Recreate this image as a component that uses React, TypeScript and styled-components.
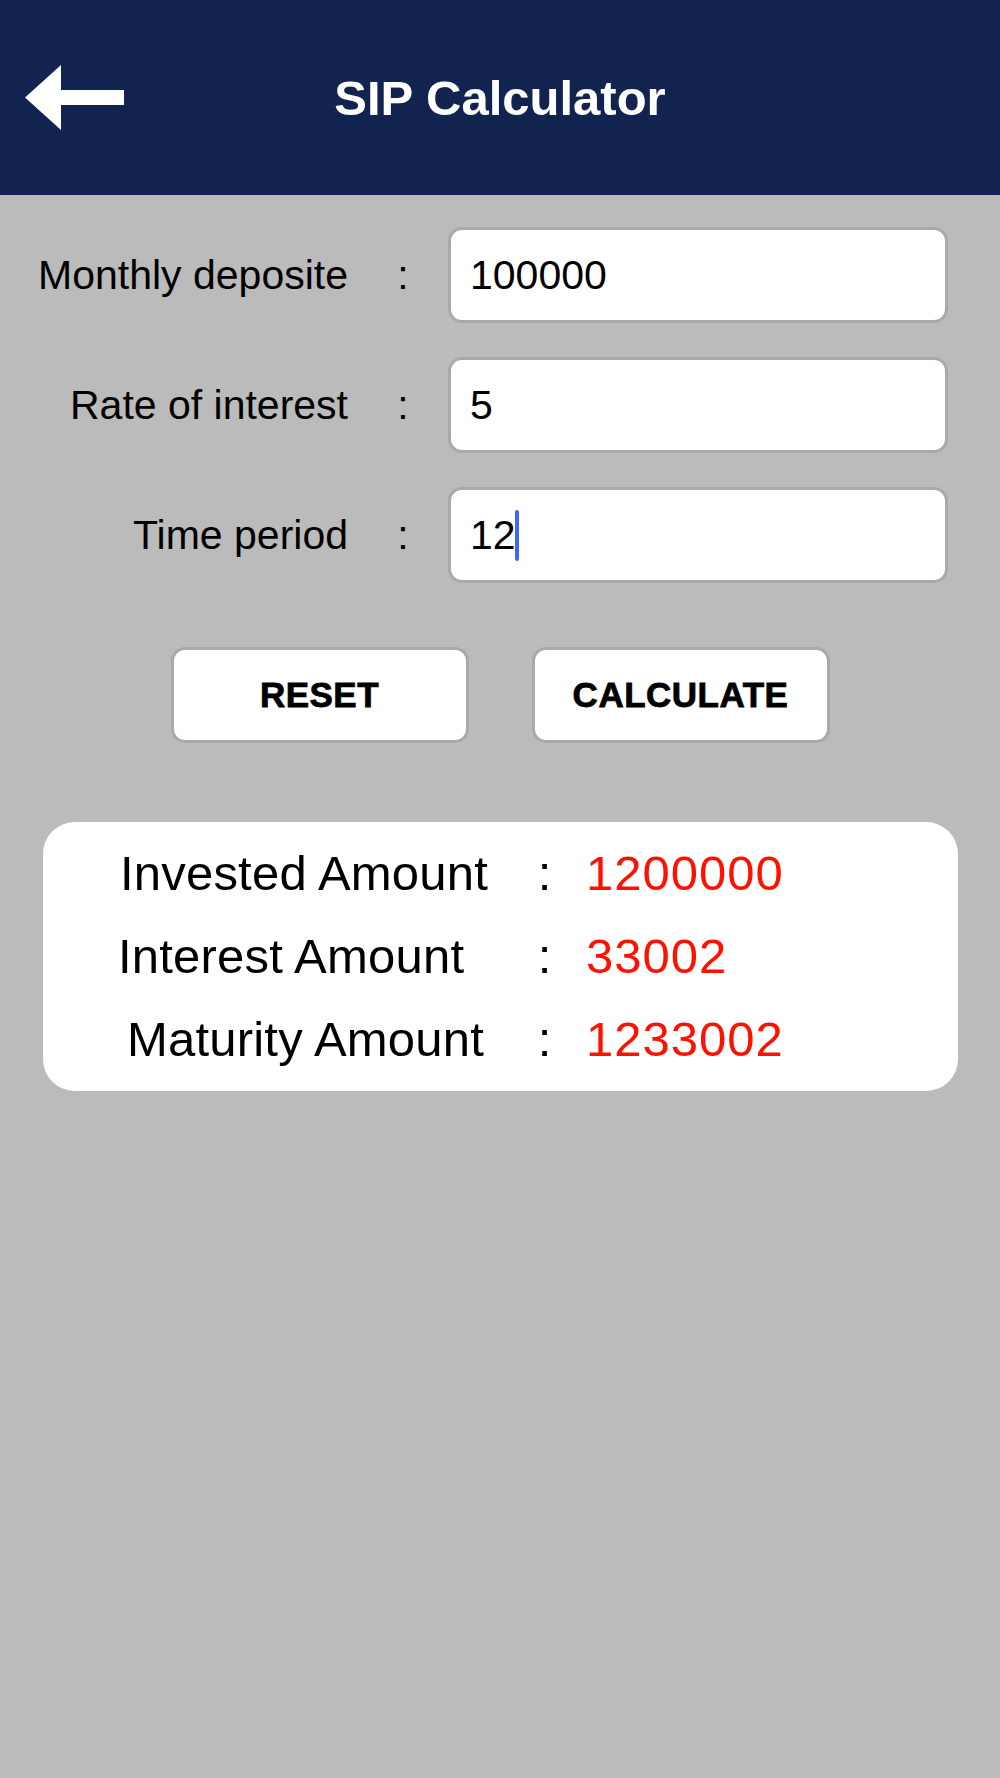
import styled, { createGlobalStyle } from "styled-components";

const GlobalStyle = createGlobalStyle`
  html, body {
    margin: 0;
    padding: 0;
    background: #bbbbbb;
    font-family: "Liberation Sans", Arial, sans-serif;
  }
`;

const fields = [
  { label: "Monthly deposite", value: "100000", focused: false },
  { label: "Rate of interest", value: "5", focused: false },
  { label: "Time period", value: "12", focused: true },
];

const results = [
  { label: "Invested Amount", value: "1200000", indent: 17 },
  { label: "Interest Amount", value: "33002", indent: 15 },
  { label: "Maturity Amount", value: "1233002", indent: 24 },
];

export default function App() {
  return (
    <Page>
      <GlobalStyle />
      <Header>
        <BackButton aria-label="back">
          <svg width="100" height="66" viewBox="0 0 100 66">
            <polygon
              points="0,32.5 36,0 36,25 99,25 99,40 36,40 36,65"
              fill="#ffffff"
            />
          </svg>
        </BackButton>
        <Title>SIP Calculator</Title>
        <span />
      </Header>

      <Form>
        {fields.map((f) => (
          <FieldRow key={f.label}>
            <Label>{f.label}</Label>
            <Colon>:</Colon>
            <Field>
              {f.value}
              {f.focused && <Caret />}
            </Field>
          </FieldRow>
        ))}
      </Form>

      <ButtonRow>
        <ActionButton>RESET</ActionButton>
        <ActionButton>CALCULATE</ActionButton>
      </ButtonRow>

      <ResultCard>
        <ResultBody>
          {results.map((r) => (
            <ResultRow key={r.label}>
              <ResultLabel indent={r.indent}>{r.label}</ResultLabel>
              <ResultColon>:</ResultColon>
              <ResultValue>{r.value}</ResultValue>
            </ResultRow>
          ))}
        </ResultBody>
      </ResultCard>
    </Page>
  );
}

const Page = styled.div`
  min-height: 1778px;
  background: #bbbbbb;
`;

const Header = styled.div`
  height: 195px;
  background: #12234f;
  display: grid;
  grid-template-columns: 1fr auto 1fr;
  align-items: center;
`;

const BackButton = styled.div`
  padding-left: 25px;
  padding-top: 1px;
  display: flex;
  align-items: center;
`;

const Title = styled.div`
  color: #ffffff;
  font-size: 49px;
  font-weight: 700;
`;

const Form = styled.div`
  padding-top: 32px;
  display: flex;
  flex-direction: column;
  gap: 34px;
`;

const FieldRow = styled.div`
  display: grid;
  grid-template-columns: 348px 100px 500px;
  align-items: center;
`;

const Label = styled.div`
  text-align: right;
  font-size: 41px;
  color: #000;
  white-space: nowrap;
`;

const Colon = styled.div`
  text-align: center;
  padding-left: 10px;
  font-size: 41px;
  color: #000;
`;

const Field = styled.div`
  box-sizing: border-box;
  height: 96px;
  background: #fff;
  border: 3px solid #a9a9a9;
  border-radius: 14px;
  padding-left: 19px;
  display: flex;
  align-items: center;
  font-size: 41px;
  color: #000;
`;

const Caret = styled.span`
  display: inline-block;
  width: 4px;
  height: 51px;
  margin-left: -1px;
  border-radius: 2px;
  background: #4169f0;
`;

const ButtonRow = styled.div`
  padding-top: 64px;
  display: flex;
  justify-content: center;
  gap: 63px;
`;

const ActionButton = styled.button`
  box-sizing: border-box;
  width: 298px;
  height: 96px;
  background: #fff;
  border: 3px solid #a9a9a9;
  border-radius: 14px;
  font-family: "Liberation Sans", Arial, sans-serif;
  font-size: 35px;
  font-weight: 700;
  letter-spacing: 0.5px;
  -webkit-text-stroke: 0.8px #000;
  color: #000;
  padding: 0;
`;

const ResultCard = styled.div`
  margin: 79px 42px 0 43px;
  background: #fff;
  border-radius: 32px;
  padding: 10px 0 0 60px;
`;

const ResultBody = styled.div`
  width: 714px;
  background: #fff;
  padding-bottom: 10px;
  margin-bottom: -2px;
`;

const ResultRow = styled.div`
  display: grid;
  grid-template-columns: 419px 45px auto;
  height: 83px;
  line-height: 83px;
  font-size: 49px;
`;

const ResultLabel = styled.div<{ indent: number }>`
  padding-left: ${(p) => p.indent}px;
  color: #000;
  white-space: nowrap;
  letter-spacing: 0.2px;
`;

const ResultColon = styled.div`
  text-align: center;
  color: #000;
`;

const ResultValue = styled.div`
  padding-left: 19px;
  color: #ff1100;
  letter-spacing: 1px;
`;
